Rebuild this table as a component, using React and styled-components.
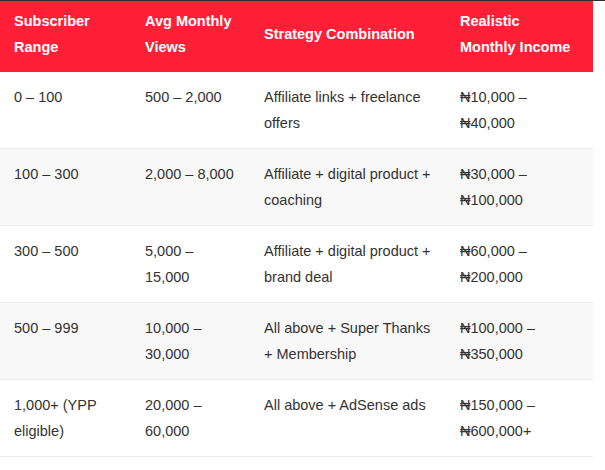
import styled, { createGlobalStyle } from "styled-components";

const GlobalStyle = createGlobalStyle`
  * {
    box-sizing: border-box;
  }
  body {
    margin: 0;
    background: #ffffff;
    font-family: "Liberation Sans", Arial, sans-serif;
  }
`;

const rows = [
  {
    range: "0 – 100",
    views: "500 – 2,000",
    strategy: "Affiliate links + freelance offers",
    income: "₦10,000 – ₦40,000",
  },
  {
    range: "100 – 300",
    views: "2,000 – 8,000",
    strategy: "Affiliate + digital product + coaching",
    income: "₦30,000 – ₦100,000",
  },
  {
    range: "300 – 500",
    views: "5,000 – 15,000",
    strategy: "Affiliate + digital product + brand deal",
    income: "₦60,000 – ₦200,000",
  },
  {
    range: "500 – 999",
    views: "10,000 – 30,000",
    strategy: "All above + Super Thanks + Membership",
    income: "₦100,000 – ₦350,000",
  },
  {
    range: "1,000+ (YPP eligible)",
    views: "20,000 – 60,000",
    strategy: "All above + AdSense ads",
    income: "₦150,000 – ₦600,000+",
  },
];

const App = () => {
  return (
    <>
      <GlobalStyle />
      <TopRule />
      <Wrapper>
        <Table>
          <colgroup>
            <col style={{ width: 131 }} />
            <col style={{ width: 119 }} />
            <col style={{ width: 196 }} />
            <col style={{ width: 147 }} />
          </colgroup>
          <thead>
            <tr>
              <Th>Subscriber Range</Th>
              <Th>Avg Monthly Views</Th>
              <Th>Strategy Combination</Th>
              <Th>Realistic Monthly Income</Th>
            </tr>
          </thead>
          <tbody>
            {rows.map((row, i) => (
              <Row key={row.range} $striped={i % 2 === 1}>
                <Td>{row.range}</Td>
                <Td>{row.views}</Td>
                <Td>{row.strategy}</Td>
                <Td>{row.income}</Td>
              </Row>
            ))}
          </tbody>
        </Table>
      </Wrapper>
    </>
  );
};

const TopRule = styled.div`
  height: 1px;
  background: #2e2e2e;
`;

const Wrapper = styled.div`
  width: 593px;
`;

const Table = styled.table`
  width: 100%;
  table-layout: fixed;
  border-collapse: collapse;
  border-spacing: 0;
  font-size: 14.5px;
  line-height: 26px;
`;

const Th = styled.th`
  background: #ff1f36;
  color: #ffffff;
  font-weight: 700;
  text-align: left;
  vertical-align: middle;
  padding: 7px 14px 12px;
`;

const Row = styled.tr`
  background: ${(p) => (p.$striped ? "#f8f8f8" : "#ffffff")};
  border-bottom: 1px solid #ebebeb;
`;

const Td = styled.td`
  color: #333333;
  text-align: left;
  vertical-align: top;
  padding: 12px 14px;
`;

export default App;
